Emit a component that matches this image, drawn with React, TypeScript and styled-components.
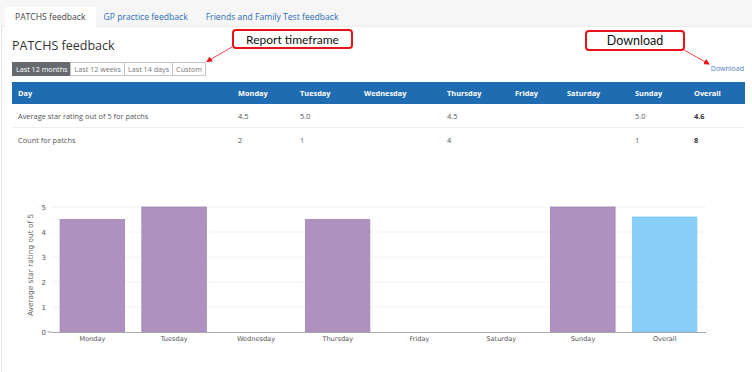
import React from "react";
import styled, { createGlobalStyle } from "styled-components";

const GlobalStyle = createGlobalStyle`
  html, body {
    margin: 0;
    padding: 0;
    background: #ffffff;
    font-family: "Open Sans", "Noto Sans", sans-serif;
  }
`;

const Page = styled.div`
  width: 752px;
  height: 372px;
  position: relative;
  overflow: hidden;
  background: #fff;
`;

const TabBar = styled.div`
  height: 27px;
  background: #f6f6f6;
  border-bottom: 1px solid #ececec;
  display: flex;
  align-items: flex-end;
  padding-left: 5px;
  box-sizing: border-box;
`;

const Tab = styled.div<{ $active?: boolean }>`
  height: 20px;
  padding: 0 10px 0 ${(p) => (p.$active ? "10px" : "8px")};
  display: flex;
  align-items: center;
  font-size: 8.6px;
  color: ${(p) => (p.$active ? "#444" : "#2a6db5")};
  background: ${(p) => (p.$active ? "#fff" : "transparent")};
  margin-bottom: -1px;
  white-space: nowrap;
`;

const Panel = styled.div`
  border-left: 1px solid #e6e6e6;
  margin-left: 1px;
  padding: 10px 8px 0 10px;
  height: 345px;
  box-sizing: border-box;
`;

const Title = styled.h2`
  margin: 0;
  font-size: 12.5px;
  font-weight: 400;
  color: #333;
  line-height: 18px;
`;

const Toolbar = styled.div`
  margin-top: 7px;
  display: flex;
  justify-content: space-between;
  align-items: flex-end;
`;

const ButtonGroup = styled.div`
  display: flex;
`;

const RangeButton = styled.button<{ $active?: boolean }>`
  height: 14px;
  padding: 0 3px;
  font-family: inherit;
  font-size: 7.2px;
  line-height: 12px;
  border: 1px solid ${(p) => (p.$active ? "#666a6e" : "#c4c4c4")};
  margin-left: -1px;
  background: ${(p) => (p.$active ? "#666a6e" : "#fff")};
  color: ${(p) => (p.$active ? "#fff" : "#777")};
  white-space: nowrap;
  &:first-child {
    margin-left: 0;
  }
`;

const DownloadLink = styled.a`
  font-size: 7px;
  color: #4f7fc0;
  text-decoration: none;
  margin-bottom: 3px;
`;

const Table = styled.table`
  margin-top: 6px;
  width: 733px;
  border-collapse: collapse;
  table-layout: fixed;
  font-size: 7.4px;
  th {
    background: #1f6cb2;
    color: #fff;
    font-weight: 700;
    text-align: left;
    height: 22px;
    padding: 0 6px;
  }
  td {
    color: #555;
    padding: 0 6px;
    height: 23px;
    border-bottom: 1px solid #efefef;
  }
  tr:last-child td {
    border-bottom: none;
  }
  td.strong {
    font-weight: 700;
    color: #333;
  }
`;

const ChartWrap = styled.div`
  margin-top: 39px;
  margin-left: -11px;
`;

const Callout = styled.div<{ $left: number; $top: number; $w: number; $h: number; $size: number }>`
  position: absolute;
  left: ${(p) => p.$left}px;
  top: ${(p) => p.$top}px;
  width: ${(p) => p.$w}px;
  height: ${(p) => p.$h}px;
  box-sizing: border-box;
  border: 2px solid #e8121a;
  border-radius: 4px;
  background: #fff;
  display: flex;
  align-items: center;
  justify-content: center;
  font-family: Lato, "Liberation Sans", sans-serif;
  font-size: ${(p) => p.$size}px;
  color: #111;
`;

const Arrows = styled.svg`
  position: absolute;
  left: 0;
  top: 0;
  pointer-events: none;
`;

const days = ["Monday", "Tuesday", "Wednesday", "Thursday", "Friday", "Saturday", "Sunday"];
const ratings: (string | null)[] = ["4.5", "5.0", null, "4.5", null, null, "5.0"];
const counts: (string | null)[] = ["2", "1", null, "4", null, null, "1"];
const colWidths = [220, 62, 64, 83, 68, 52, 68, 59, 57];

const bars = [
  { label: "Monday", value: 4.5 },
  { label: "Tuesday", value: 5 },
  { label: "Wednesday", value: 0 },
  { label: "Thursday", value: 4.5 },
  { label: "Friday", value: 0 },
  { label: "Saturday", value: 0 },
  { label: "Sunday", value: 5 },
  { label: "Overall", value: 4.6 },
];

const Chart = () => {
  // plot area: 8 categories across 50.6..704.6, 25px per star
  const x0 = 50.6;
  const step = 81.75;
  const yBase = 142;
  const unit = 25;
  return (
    <svg width={752} height={165} style={{ display: "block" }}>
      {[1, 2, 3, 4, 5].map((t) => (
        <line key={t} x1={x0} x2={705} y1={yBase - t * unit} y2={yBase - t * unit} stroke="#f2f2f2" strokeWidth={1} />
      ))}
      {[0, 1, 2, 3, 4, 5].map((t) => (
        <text key={t} x={45} y={yBase - t * unit + 2.5} fontSize={7} fill="#555" textAnchor="end" fontFamily="DejaVu Sans, sans-serif">
          {t}
        </text>
      ))}
      <line x1={46.5} x2={x0} y1={yBase} y2={yBase} stroke="#999" />
      {bars.map((b, i) =>
        b.value > 0 ? (
          <rect
            key={b.label}
            x={x0 + i * step + 8.5}
            y={yBase - b.value * unit}
            width={64.5}
            height={b.value * unit}
            fill={b.label === "Overall" ? "#87cefa" : "#af91c0"}
            stroke={b.label === "Overall" ? "#7cc7f7" : "#a283b6"}
            strokeWidth={0.8}
          />
        ) : null
      )}
      <line x1={x0} x2={705} y1={yBase + 0.5} y2={yBase + 0.5} stroke="#a9a9a9" strokeWidth={1} />
      {bars.map((b, i) => (
        <text key={b.label} x={x0 + i * step + step / 2} y={yBase + 8.5} fontSize={6.6} fill="#555" textAnchor="middle" fontFamily="DejaVu Sans, sans-serif">
          {b.label}
        </text>
      ))}
      <text
        transform={`translate(32 ${yBase - 67}) rotate(-90)`}
        fontSize={7.4}
        fill="#666"
        textAnchor="middle"
        fontFamily="DejaVu Sans, sans-serif"
      >
        Average star rating out of 5
      </text>
    </svg>
  );
};

const App = () => {
  return (
    <Page>
      <GlobalStyle />
      <TabBar>
        <Tab $active>PATCHS feedback</Tab>
        <Tab>GP practice feedback</Tab>
        <Tab>Friends and Family Test feedback</Tab>
      </TabBar>
      <Panel>
        <Title>PATCHS feedback</Title>
        <Toolbar>
          <ButtonGroup>
            <RangeButton $active>Last 12 months</RangeButton>
            <RangeButton>Last 12 weeks</RangeButton>
            <RangeButton>Last 14 days</RangeButton>
            <RangeButton>Custom</RangeButton>
          </ButtonGroup>
          <DownloadLink href="#">Download</DownloadLink>
        </Toolbar>
        <Table>
          <colgroup>
            {colWidths.map((w, i) => (
              <col key={i} style={{ width: w }} />
            ))}
          </colgroup>
          <thead>
            <tr>
              <th>Day</th>
              {days.map((d) => (
                <th key={d}>{d}</th>
              ))}
              <th>Overall</th>
            </tr>
          </thead>
          <tbody>
            <tr>
              <td>Average star rating out of 5 for patchs</td>
              {ratings.map((r, i) => (
                <td key={i}>{r}</td>
              ))}
              <td className="strong">4.6</td>
            </tr>
            <tr>
              <td>Count for patchs</td>
              {counts.map((c, i) => (
                <td key={i}>{c}</td>
              ))}
              <td className="strong">8</td>
            </tr>
          </tbody>
        </Table>
        <ChartWrap>
          <Chart />
        </ChartWrap>
      </Panel>

      <Callout $left={232} $top={29} $w={121} $h={20} $size={12}>
        Report timeframe
      </Callout>
      <Callout $left={585} $top={30} $w={100} $h={21} $size={12.5}>
        Download
      </Callout>
      <Arrows width={752} height={372}>
        <defs>
          <marker id="head" markerWidth="6" markerHeight="6" refX="5" refY="3" orient="auto" markerUnits="userSpaceOnUse">
            <path d="M0,0 L6,3 L0,6 z" fill="#e8121a" />
          </marker>
        </defs>
        <line x1={232} y1={47} x2={207} y2={61.5} stroke="#e8121a" strokeWidth={0.8} markerEnd="url(#head)" />
        <line x1={684} y1={50} x2={709} y2={64} stroke="#e8121a" strokeWidth={0.8} markerEnd="url(#head)" />
      </Arrows>
    </Page>
  );
};

export default App;
